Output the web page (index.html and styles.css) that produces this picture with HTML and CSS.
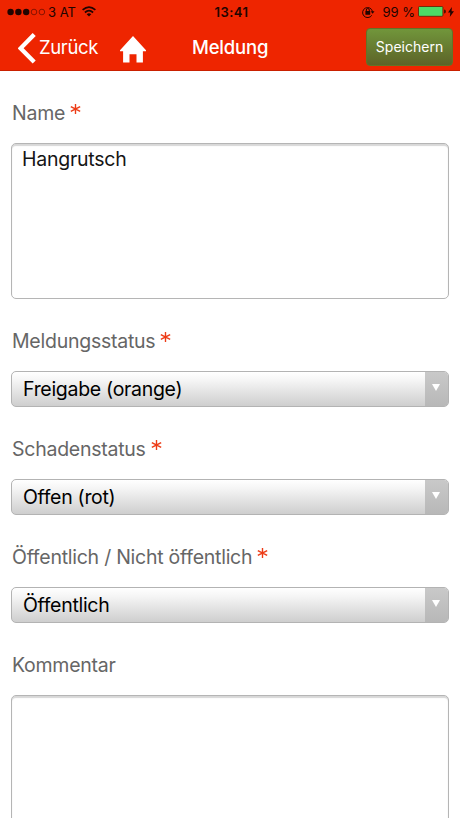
FILE: index.html
```html
<!DOCTYPE html>
<html lang="de">
<head>
<meta charset="utf-8">
<title>Meldung</title>
<link rel="stylesheet" href="styles.css">
</head>
<body>
<header class="header">
  <div class="status">
    <div class="carrier">
      <svg class="signal" width="39" height="8" viewBox="0 0 39 8"><g fill="#210400"><circle cx="3.6" cy="4" r="3.2"/><circle cx="11.4" cy="4" r="3.2"/><circle cx="19.2" cy="4" r="3.2"/></g><g fill="none" stroke="#5c0c00" stroke-width=".7"><circle cx="27" cy="4" r="2.8"/><circle cx="34.9" cy="4" r="2.8"/></g></svg>
      <span class="operator">3 AT</span>
      <svg class="wifi" width="14" height="11" viewBox="0 0 14 11"><g fill="none" stroke="#210400" stroke-width="1.7"><path d="M.6 3.9Q7-1.7 13.4 3.9"/><path d="M2.9 6.5Q7 2.8 11.1 6.5"/></g><path d="M4.7 8.3Q7 6.3 9.3 8.3L7 10.6Z" fill="#210400"/></svg>
    </div>
    <span class="clock">13:41</span>
    <div class="power">
      <svg class="lock" width="13" height="12" viewBox="0 0 13 12"><path d="M9.8 9.3A5 5 0 1 1 10.5 5.5" fill="none" stroke="#210400" stroke-width="1"/><path d="M8.7 5.3h3.8l-1.9 2.4z" fill="#210400"/><rect x="3.4" y="5.1" width="4.8" height="3.7" rx=".4" fill="#210400"/><path d="M4.3 5.3V4a1.5 1.5 0 0 1 3 0v1.3" fill="none" stroke="#210400"/></svg>
      <span class="percent">99 %</span>
      <svg class="battery" width="28" height="11" viewBox="0 0 28 11"><rect x=".5" y=".5" width="24.4" height="9.8" rx="1" fill="#4bdc66" stroke="#651800" stroke-width=".8"/><path d="M26 3.5q2 .2 2 2t-2 2z" fill="#501000"/></svg>
      <svg class="bolt" width="6" height="10" viewBox="0 0 6 10"><path d="M3.9 0 0 5.6h2.3L1.8 10 6 4.2H3.6z" fill="#210400"/></svg>
    </div>
  </div>
  <nav class="nav">
    <a class="back"><svg width="18" height="31" viewBox="0 0 18 31"><path d="M16.2 1.5 2.6 15.3 16.2 29" fill="none" stroke="#fff" stroke-width="4.3"/></svg><span class="back-text">Zurück</span></a>
    <svg class="home" width="26" height="27" viewBox="0 0 26 27"><path d="M13 0 0 14.2v1h3.1V26.5h6.4V18.2h7v8.3h6.4V15.2H26v-1z" fill="#fff"/></svg>
    <h1 class="title">Meldung</h1>
    <button class="save">Speichern</button>
  </nav>
</header>
<main class="form">
  <section class="field">
    <div class="label"><span>Name</span><svg class="star" viewBox="0 0 12 12"><path d="M6 .6v10.8M.9 3.3l10.2 5.4M11.1 3.3.9 8.7"/></svg></div>
    <div class="area"><span>Hangrutsch</span></div>
  </section>
  <section class="field">
    <div class="label"><span>Meldungsstatus</span><svg class="star" viewBox="0 0 12 12"><path d="M6 .6v10.8M.9 3.3l10.2 5.4M11.1 3.3.9 8.7"/></svg></div>
    <div class="select"><span>Freigabe (orange)</span><i class="arrow"></i></div>
  </section>
  <section class="field">
    <div class="label"><span>Schadenstatus</span><svg class="star" viewBox="0 0 12 12"><path d="M6 .6v10.8M.9 3.3l10.2 5.4M11.1 3.3.9 8.7"/></svg></div>
    <div class="select"><span>Offen (rot)</span><i class="arrow"></i></div>
  </section>
  <section class="field">
    <div class="label"><span>Öffentlich / Nicht öffentlich</span><svg class="star" viewBox="0 0 12 12"><path d="M6 .6v10.8M.9 3.3l10.2 5.4M11.1 3.3.9 8.7"/></svg></div>
    <div class="select"><span>Öffentlich</span><i class="arrow"></i></div>
  </section>
  <section class="field">
    <div class="label"><span>Kommentar</span></div>
    <div class="area"></div>
  </section>
</main>
</body>
</html>
```
FILE: styles.css
```css
* { box-sizing: border-box; }
body {
  margin: 0;
  height: 818px;
  overflow: hidden;
  background: #fff;
  font-family: Inter, "Liberation Sans", sans-serif;
}
svg { display: block; flex: none; }
.header {
  height: 71px;
  background: #ee2500;
  border-bottom: 1px solid #c92000;
}
.status {
  display: grid;
  grid-template-columns: 1fr auto 1fr;
  height: 24px;
  padding: 0 6px 0 7px;
  align-items: center;
  color: #210400;
  font-size: 13px;
  line-height: 24px;
}
.carrier, .power { display: flex; align-items: center; }
.power { justify-content: flex-end; }
.operator { margin-left: 2px; }
.wifi { margin-left: 6px; margin-top: -2px; }
.clock { font-weight: 600; letter-spacing: .5px; padding-left: 2px; }
.percent { margin: 0 3px 0 7px; }
.battery { margin-top: -1px; }
.bolt { margin-left: 2px; }
.nav {
  display: grid;
  grid-template-columns: 102px 26px 1fr 87px;
  height: 46px;
  padding: 0 7px 0 18px;
  align-items: center;
  color: #fff;
}
.back { display: flex; align-items: center; gap: 3px; margin-top: 3px; }
.back-text { font-size: 18.5px; line-height: 24px; margin-top: -3px; letter-spacing: -.35px; }
.home { margin-top: 5px; }
.title {
  margin: 0;
  padding-left: 46px;
  font-size: 18.5px;
  line-height: 24px;
  font-weight: 500;
  letter-spacing: -.2px;
}
.save {
  height: 38px;
  padding: 0 0 2px;
  border: 1px solid #637326;
  border-radius: 4px;
  background: linear-gradient(#71963b, #5d6328);
  color: #fff;
  font-family: inherit;
  font-size: 14px;
}
.form { display: flex; flex-direction: column; gap: 30px; padding: 30px 11px 0; }
.field { display: flex; flex-direction: column; gap: 18px; }
.label {
  display: flex;
  height: 24px;
  gap: 5px;
  padding-left: 1px;
  color: #666;
  font-size: 19.5px;
  line-height: 24px;
  letter-spacing: -.25px;
  white-space: nowrap;
}
.star { width: 11px; height: 12px; margin-top: 2px; fill: none; stroke: #ed3b16; stroke-width: 1.5; }
.area {
  height: 156px;
  padding: 3px 10px;
  border: 1px solid #b5b5b5;
  border-radius: 5px;
  box-shadow: inset 0 2px 1px #d8d8d8;
  font-size: 19.5px;
  line-height: 25px;
  letter-spacing: -.25px;
  color: #151515;
}
.select {
  display: flex;
  height: 36px;
  justify-content: space-between;
  padding-left: 11px;
  border: 1px solid #b3b3b3;
  border-radius: 5px;
  overflow: hidden;
  background: linear-gradient(#fff, #f5f5f5 25%, #cecece);
  font-size: 19.5px;
  line-height: 34px;
  letter-spacing: -.3px;
  color: #000;
}
.arrow {
  display: flex;
  width: 23px;
  align-items: center;
  justify-content: center;
  background: linear-gradient(#c9c9c9, #b8b8b8);
}
.arrow::before {
  content: "";
  border: 4px solid transparent;
  border-top: 7px solid #fff;
  border-bottom: 0;
  margin: -3px 2px 0 0;
}
```
